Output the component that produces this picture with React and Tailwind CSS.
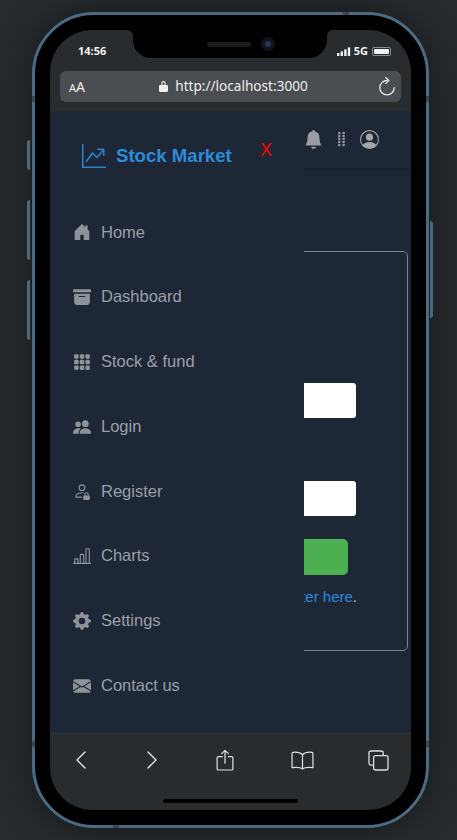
import {
  BsArchiveFill,
  BsBarChartLine,
  BsBellFill,
  BsEnvelopeFill,
  BsGearFill,
  BsGraphUpArrow,
  BsGrid3X3GapFill,
  BsHouseDoorFill,
  BsPeopleFill,
  BsPersonCircle,
  BsPersonLock,
} from 'react-icons/bs'

const menu = [
  { label: 'Home', icon: BsHouseDoorFill },
  { label: 'Dashboard', icon: BsArchiveFill },
  { label: 'Stock & fund', icon: BsGrid3X3GapFill },
  { label: 'Login', icon: BsPeopleFill },
  { label: 'Register', icon: BsPersonLock },
  { label: 'Charts', icon: BsBarChartLine },
  { label: 'Settings', icon: BsGearFill },
  { label: 'Contact us', icon: BsEnvelopeFill },
]

function DotsIcon() {
  return (
    <svg width="7" height="16" viewBox="0 0 7 16" fill="#8f9299">
      {[0, 3, 6, 9, 12].map(y => (
        <g key={y}>
          <rect x="0" y={y + 1} width="2.4" height="2.2" />
          <rect x="4.4" y={y + 1} width="2.4" height="2.2" />
        </g>
      ))}
    </svg>
  )
}

function ReloadIcon() {
  return (
    <svg width="18" height="20" viewBox="0 0 18 20" fill="none" stroke="#e8e8e8" strokeWidth="1.3" strokeLinecap="round" strokeLinejoin="round">
      <path d="M9 3.5 A7.2 7.2 0 1 0 16.2 10.7" />
      <path d="M7.6 0.6 L11 3.4 L7.8 6.4" />
    </svg>
  )
}

function ChevronIcon({ flip }) {
  return (
    <svg width="10" height="18" viewBox="0 0 10 18" fill="none" stroke="#e6e6e6" strokeWidth="1.4" strokeLinecap="round" strokeLinejoin="round">
      <path d={flip ? 'M1 1l8 8-8 8' : 'M9 1L1 9l8 8'} />
    </svg>
  )
}

function ShareIcon() {
  return (
    <svg width="19" height="23" viewBox="0 0 20 24" fill="none" stroke="#dedfe0" strokeWidth="1.3" strokeLinecap="round" strokeLinejoin="round">
      <path d="M6.5 8H2.6A1.4 1.4 0 0 0 1.2 9.4v11.2A1.4 1.4 0 0 0 2.6 22h13.8a1.4 1.4 0 0 0 1.4-1.4V9.4A1.4 1.4 0 0 0 16.4 8H13" />
      <path d="M9.5 15V1.5M6 4.8l3.5-3.4L13 4.8" />
    </svg>
  )
}

function BookIcon() {
  return (
    <svg width="23" height="19" viewBox="0 0 24 20" fill="none" stroke="#dedfe0" strokeWidth="1.3" strokeLinecap="round" strokeLinejoin="round">
      <path d="M12 4C10 1.8 6 1 2 1.4 1.4 1.5 1 2 1 2.5V17.5C5 17 9.5 17 12 18.8 14.5 17 19 17 23 17.5V2.5C23 2 22.6 1.5 22 1.4 18 1 14 1.8 12 4Z" />
      <path d="M12 4V18.8" />
    </svg>
  )
}

function TabsIcon() {
  return (
    <svg width="21" height="21" viewBox="0 0 21 21" fill="none" stroke="#dedfe0" strokeWidth="1.3" strokeLinejoin="round">
      <path d="M5.5 15.2H3A2 2 0 0 1 1 13.2V3A2 2 0 0 1 3 1h10.2a2 2 0 0 1 2 2v2.5" />
      <rect x="5.6" y="5.6" width="14.4" height="14.4" rx="2" />
    </svg>
  )
}

function SignalIcon() {
  return (
    <svg width="14" height="9" viewBox="0 0 14 9" fill="#f2f2f2">
      <rect x="0" y="6" width="2.4" height="3" />
      <rect x="3.6" y="4.4" width="2.4" height="4.6" />
      <rect x="7.2" y="2.4" width="2.4" height="6.6" />
      <rect x="10.8" y="0.4" width="2.4" height="8.6" />
    </svg>
  )
}

export default function App() {
  return (
    <div className="flex h-[840px] w-[457px] items-start overflow-hidden bg-[#272b2e] pl-[32px] pt-[12px]">
      <div className="relative h-[816px] w-[397px] shrink-0 rounded-[62px] border-3 border-[#4a6b82] bg-black p-[15px] shadow-[0_0_36px_rgba(0,0,0,0.45)]">
        {/* side buttons */}
        <div className="absolute -left-[8px] top-[125px] h-[30px] w-[3px] rounded-l-sm bg-[#4f6878]" />
        <div className="absolute -left-[8px] top-[185px] h-[60px] w-[3px] rounded-l-sm bg-[#4f6878]" />
        <div className="absolute -left-[8px] top-[265px] h-[60px] w-[3px] rounded-l-sm bg-[#4f6878]" />
        <div className="absolute -right-[7px] top-[206px] h-[97px] w-[3px] rounded-r-sm bg-[#4f6878]" />

        {/* antenna marks */}
        <div className="absolute -left-[3px] top-[81px] h-[6px] w-[3px] bg-[#3b4850]" />
        <div className="absolute -right-[3px] top-[81px] h-[6px] w-[3px] bg-[#3b4850]" />
        <div className="absolute -left-[3px] bottom-[78px] h-[6px] w-[3px] bg-[#3b4850]" />
        <div className="absolute -right-[3px] bottom-[78px] h-[6px] w-[3px] bg-[#3b4850]" />
        <div className="absolute -top-[3px] right-[77px] h-[3px] w-[6px] bg-[#3b4850]" />
        <div className="absolute -bottom-[3px] left-[78px] h-[3px] w-[6px] bg-[#3b4850]" />

        <div className="relative flex h-[780px] w-[361px] flex-col overflow-hidden rounded-[42px] bg-[#282c2f]">
          {/* notch */}
          <div className="absolute left-[83px] top-0 z-20 flex h-[28px] w-[194px] items-center justify-center gap-[10px] rounded-b-[18px] bg-black pl-[22px]">
            <div className="absolute -left-[6px] top-0 h-[6px] w-[6px] bg-black">
              <div className="h-full w-full rounded-tr-[6px] bg-[#282c2f]" />
            </div>
            <div className="absolute -right-[6px] top-0 h-[6px] w-[6px] bg-black">
              <div className="h-full w-full rounded-tl-[6px] bg-[#282c2f]" />
            </div>
            <div className="h-[5px] w-[44px] rounded-full bg-[#1c1c1e]" />
            <div className="h-[14px] w-[14px] rounded-full bg-[#10131c] p-[4px]">
              <div className="h-[6px] w-[6px] rounded-full bg-[#27335f]" />
            </div>
          </div>

          {/* status bar */}
          <div className="flex h-[41px] items-start justify-between pl-[28px] pr-[20px] pt-[14px] font-['Noto_Sans',sans-serif] text-[11px] font-bold leading-[14px] text-[#f2f2f2]">
            <span>14:56</span>
            <div className="flex items-center gap-[3px] pt-[2px]">
              <SignalIcon />
              <span className="leading-[10px]">5G</span>
              <div className="ml-[1px] flex h-[9px] w-[19px] items-center rounded-[2px] border border-[#8a8c8e] p-[1px]">
                <div className="h-full w-full rounded-[1px] bg-[#f2f2f2]" />
              </div>
            </div>
          </div>

          {/* url bar */}
          <div className="mx-[10px] flex h-[31px] shrink-0 items-center justify-between rounded-[6px] bg-[#4a4d51] pl-[9px] pr-[5px] font-['Noto_Sans',sans-serif] text-[#eeeeee]">
            <span className="text-[14px] leading-none"><span className="text-[11px]">A</span>A</span>
            <div className="flex items-center gap-[7px] pl-[4px] text-[13.6px]">
              <svg width="9" height="12" viewBox="0 0 9 12" fill="#eeeeee">
                <path d="M2.3 5V3.2a2.2 2.2 0 0 1 4.4 0V5H8a1 1 0 0 1 1 1v5a1 1 0 0 1-1 1H1a1 1 0 0 1-1-1V6a1 1 0 0 1 1-1h1.3Zm1.2 0h2V3.2a1 1 0 0 0-2 0V5Z" />
              </svg>
              <span>http://localhost:3000</span>
            </div>
            <ReloadIcon />
          </div>

          {/* page */}
          <div className="relative mt-[9px] h-[622px] shrink-0 overflow-hidden bg-[#1e2736] font-['Liberation_Sans',sans-serif]">
            <header className="flex h-[57px] items-center justify-end gap-[15px] pb-[1px] pr-[32px] shadow-[0_2px_4px_rgba(0,0,0,0.25)]">
              <BsBellFill size={19} color="#9a9ca2" />
              <DotsIcon />
              <BsPersonCircle size={19} color="#a4a6ab" />
            </header>

            <div className="ml-[20px] mr-[3px] mt-[83px] flex h-[400px] flex-col items-end rounded-[5px] border border-[#7f8389] pr-[51px] pt-[131px]">
              <div className="h-[35px] w-[200px] rounded-[3px] bg-white" />
              <div className="mt-[63px] h-[35px] w-[200px] rounded-[3px] bg-white" />
              <div className="mr-[8px] mt-[23px] h-[36px] w-[150px] rounded-[5px] bg-[#4caf50]" />
              <p className="-mr-[1px] mt-[12px] text-[15px] leading-[20px] text-[#c4c7cc]">
                Not registered? <span className="text-[#2a8bdc]">Register here</span>.
              </p>
            </div>

            {/* drawer */}
            <aside className="absolute bottom-0 left-0 top-0 w-[254px] bg-[#1e2736]">
              <div className="relative flex h-[89px] items-start pl-[32px] pt-[33px]">
                <BsGraphUpArrow size={24} color="#2a86cf" />
                <span className="ml-[10px] pt-[1px] text-[18.6px] font-bold leading-[22px] text-[#2b8cdb]">Stock Market</span>
                <span className="absolute left-[210px] top-[28px] text-[18px] leading-[22px] text-[#ff0000]">X</span>
              </div>
              <nav className="flex flex-col">
                {menu.map(item => (
                  <a key={item.label} className="flex h-[64.75px] items-center gap-[10px] pl-[23px] text-[16.5px] text-[#9a9fa8]">
                    <item.icon size={18} color="#8f9299" />
                    <span className="-mt-[1px]">{item.label}</span>
                  </a>
                ))}
              </nav>
            </aside>
          </div>

          {/* bottom toolbar */}
          <div className="flex flex-1 flex-col border-t border-[#32373b]">
            <div className="flex h-[52px] items-center pl-[26px]">
              <ChevronIcon />
              <div className="ml-[61px]"><ChevronIcon flip /></div>
              <div className="ml-[59px]"><ShareIcon /></div>
              <div className="ml-[56px]"><BookIcon /></div>
              <div className="ml-[54px]"><TabsIcon /></div>
            </div>
            <div className="mx-auto mt-[13px] h-[4px] w-[135px] rounded-full bg-black" />
          </div>
        </div>
      </div>
    </div>
  )
}
